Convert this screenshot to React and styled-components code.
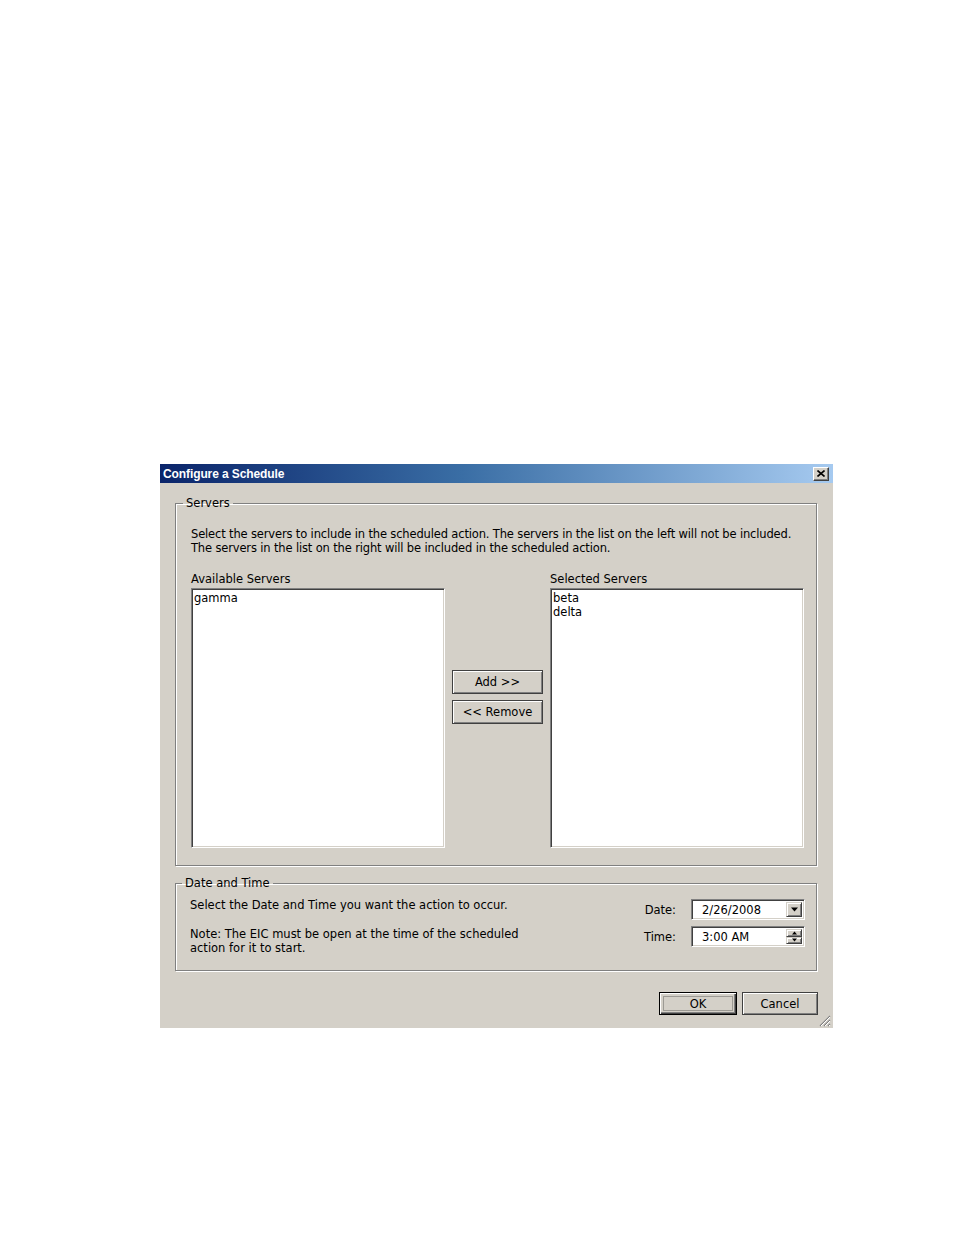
import React from 'react'
import styled, { createGlobalStyle } from 'styled-components'

const GlobalStyle = createGlobalStyle`
  html, body {
    margin: 0;
    padding: 0;
    background: #ffffff;
  }
  body {
    font-family: "DejaVu Sans", "Liberation Sans", Arial, sans-serif;
  }
`

const Page = styled.div`
  padding: 464px 0 0 160px;
  height: 1235px;
  box-sizing: border-box;
`

const Dialog = styled.div`
  position: relative;
  width: 673px;
  height: 564px;
  background: #d4d0c8;
  display: flex;
  flex-direction: column;
  font-size: 11.5px;
  color: #000;
`

const TitleBar = styled.div`
  height: 19px;
  display: flex;
  align-items: center;
  justify-content: space-between;
  padding: 0 4px 0 3px;
  background: linear-gradient(to right, #0a246a 0%, #3a6ea5 45%, #a6caf0 100%);
`

const TitleText = styled.span`
  color: #ffffff;
  font-family: "Liberation Sans", Arial, sans-serif;
  font-weight: bold;
  font-size: 12px;
  letter-spacing: -0.1px;
`

const CloseButton = styled.div`
  width: 16px;
  height: 14px;
  box-sizing: border-box;
  background: #d4d0c8;
  border: 1px solid;
  border-color: #ffffff #404040 #404040 #ffffff;
  box-shadow: inset -1px -1px 0 #808080;
  display: flex;
  align-items: center;
  justify-content: center;
`

const Body = styled.div`
  flex: 1;
  display: flex;
  flex-direction: column;
  padding: 13px 16px 0 15px;
`

const Group = styled.fieldset`
  margin: 0 0 ${p => p.$gap || 0}px 0;
  padding: ${p => p.$pad};
  border: 1px solid #808080;
  box-shadow: inset 1px 1px 0 #ffffff, 1px 1px 0 #ffffff;
  min-width: 0;
`

const Legend = styled.legend`
  padding: 0 3px;
  margin-left: -8px;
  line-height: 14px;
`

const Paragraph = styled.p`
  margin: 0 0 ${p => p.$after || 0}px 0;
  line-height: 14px;
  white-space: nowrap;
  letter-spacing: ${p => p.$tight || 0}px;
`

const ListsRow = styled.div`
  display: grid;
  grid-template-columns: 254px 91px 254px;
  column-gap: 7px;
`

const ListColumn = styled.div`
  display: flex;
  flex-direction: column;
  gap: 2px;
`

const Label = styled.span`
  line-height: 14px;
`

const ListBox = styled.div`
  height: 260px;
  background: #ffffff;
  box-sizing: border-box;
  border: 1px solid;
  border-color: #808080 #ffffff #ffffff #808080;
  box-shadow: inset 1px 1px 0 #404040, inset -1px -1px 0 #d4d0c8;
  padding: 2px 2px;
`

const ListItem = styled.div`
  line-height: 14px;
`

const ButtonColumn = styled.div`
  display: flex;
  flex-direction: column;
  gap: 6px;
  padding-top: 98px;
`

const Button = styled.button`
  width: ${p => p.$w || 91}px;
  height: ${p => p.$h || 24}px;
  box-sizing: border-box;
  background: #d4d0c8;
  font-family: inherit;
  font-size: 11.5px;
  color: #000;
  padding: 0;
  border: 1px solid ${p => (p.$default ? '#000000' : '#404040')};
  box-shadow: ${p =>
    p.$default
      ? 'inset 1px 1px 0 #ffffff, inset -1px -1px 0 #404040, inset -2px -2px 0 #808080'
      : 'inset 1px 1px 0 #ffffff, inset -1px -1px 0 #808080'};
  position: relative;
  display: flex;
  align-items: center;
  justify-content: center;
`

const FocusRing = styled.span`
  position: absolute;
  inset: 3px;
  border: 1px solid #9c9a94;
`

const DateRow = styled.div`
  display: flex;
  justify-content: space-between;
  align-items: flex-start;
`

const DateText = styled.div`
  padding-top: 1px;
`

const Fields = styled.div`
  display: grid;
  grid-template-columns: auto 114px;
  column-gap: 15px;
  row-gap: 6px;
  align-items: center;
  padding-top: 2px;
`

const FieldLabel = styled.span`
  text-align: right;
  line-height: 14px;
`

const Field = styled.div`
  height: 21px;
  box-sizing: border-box;
  background: #ffffff;
  border: 1px solid;
  border-color: #808080 #ffffff #ffffff #808080;
  box-shadow: inset 1px 1px 0 #404040, inset -1px -1px 0 #d4d0c8;
  display: flex;
  align-items: stretch;
  padding: 2px;
`

const FieldValue = styled.span`
  flex: 1;
  padding-left: 8px;
  line-height: 16px;
`

const DropButton = styled.div`
  width: 16px;
  box-sizing: border-box;
  background: #d4d0c8;
  border: 1px solid;
  border-color: #d4d0c8 #404040 #404040 #d4d0c8;
  box-shadow: inset 1px 1px 0 #ffffff, inset -1px -1px 0 #808080;
  display: flex;
  align-items: center;
  justify-content: center;
`

const Spinner = styled.div`
  width: 16px;
  display: flex;
  flex-direction: column;
`

const SpinHalf = styled(DropButton)`
  flex: 1;
`

const ButtonRow = styled.div`
  display: flex;
  justify-content: flex-end;
  gap: 5px;
  margin-top: 21px;
  margin-right: -1px;
`

const Grip = styled.svg`
  position: absolute;
  right: 2px;
  bottom: 1px;
`

const Arrow = ({ up, size = 7 }) => (
  <svg width={size} height={Math.ceil(size / 2) + 1} viewBox="0 0 7 4">
    <polygon points={up ? '3.5,0 7,4 0,4' : '0,0 7,0 3.5,4'} fill="#000" />
  </svg>
)

export default function App() {
  return (
    <Page>
      <GlobalStyle />
      <Dialog>
        <TitleBar>
          <TitleText>Configure a Schedule</TitleText>
          <CloseButton>
            <svg width="8" height="7" viewBox="0 0 8 7">
              <path d="M0.5 0.5 L7.5 6.5 M7.5 0.5 L0.5 6.5" stroke="#000" strokeWidth="1.6" />
            </svg>
          </CloseButton>
        </TitleBar>
        <Body>
          <Group $pad="17px 11px 17px 15px" $gap={10}>
            <Legend>Servers</Legend>
            <Paragraph $after={17} $tight={-0.15}>
              Select the servers to include in the scheduled action. The servers in the list on the left will not be included.
              <br />
              The servers in the list on the right will be included in the scheduled action.
            </Paragraph>
            <ListsRow>
              <ListColumn>
                <Label>Available Servers</Label>
                <ListBox>
                  <ListItem>gamma</ListItem>
                </ListBox>
              </ListColumn>
              <ButtonColumn>
                <Button>Add &gt;&gt;</Button>
                <Button>&lt;&lt; Remove</Button>
              </ButtonColumn>
              <ListColumn>
                <Label>Selected Servers</Label>
                <ListBox>
                  <ListItem>beta</ListItem>
                  <ListItem>delta</ListItem>
                </ListBox>
              </ListColumn>
            </ListsRow>
          </Group>
          <Group $pad="7px 11px 15px 14px">
            <Legend>Date and Time</Legend>
            <DateRow>
              <DateText>
                <Paragraph $after={15}>Select the Date and Time you want the action to occur.</Paragraph>
                <Paragraph>
                  Note: The EIC must be open at the time of the scheduled
                  <br />
                  action for it to start.
                </Paragraph>
              </DateText>
              <Fields>
                <FieldLabel>Date:</FieldLabel>
                <Field>
                  <FieldValue>2/26/2008</FieldValue>
                  <DropButton>
                    <Arrow />
                  </DropButton>
                </Field>
                <FieldLabel>Time:</FieldLabel>
                <Field>
                  <FieldValue>3:00 AM</FieldValue>
                  <Spinner>
                    <SpinHalf>
                      <Arrow up size={5} />
                    </SpinHalf>
                    <SpinHalf>
                      <Arrow size={5} />
                    </SpinHalf>
                  </Spinner>
                </Field>
              </Fields>
            </DateRow>
          </Group>
          <ButtonRow>
            <Button $w={78} $h={23} $default>
              <FocusRing />
              OK
            </Button>
            <Button $w={76} $h={23}>Cancel</Button>
          </ButtonRow>
        </Body>
        <Grip width="13" height="13" viewBox="0 0 13 13">
          <path d="M12 2 L2 12 M12 6 L6 12 M12 10 L10 12" stroke="#808080" strokeWidth="1.2" />
          <path d="M12 3 L3 12 M12 7 L7 12 M12 11 L11 12" stroke="#ffffff" strokeWidth="1" />
        </Grip>
      </Dialog>
    </Page>
  )
}
